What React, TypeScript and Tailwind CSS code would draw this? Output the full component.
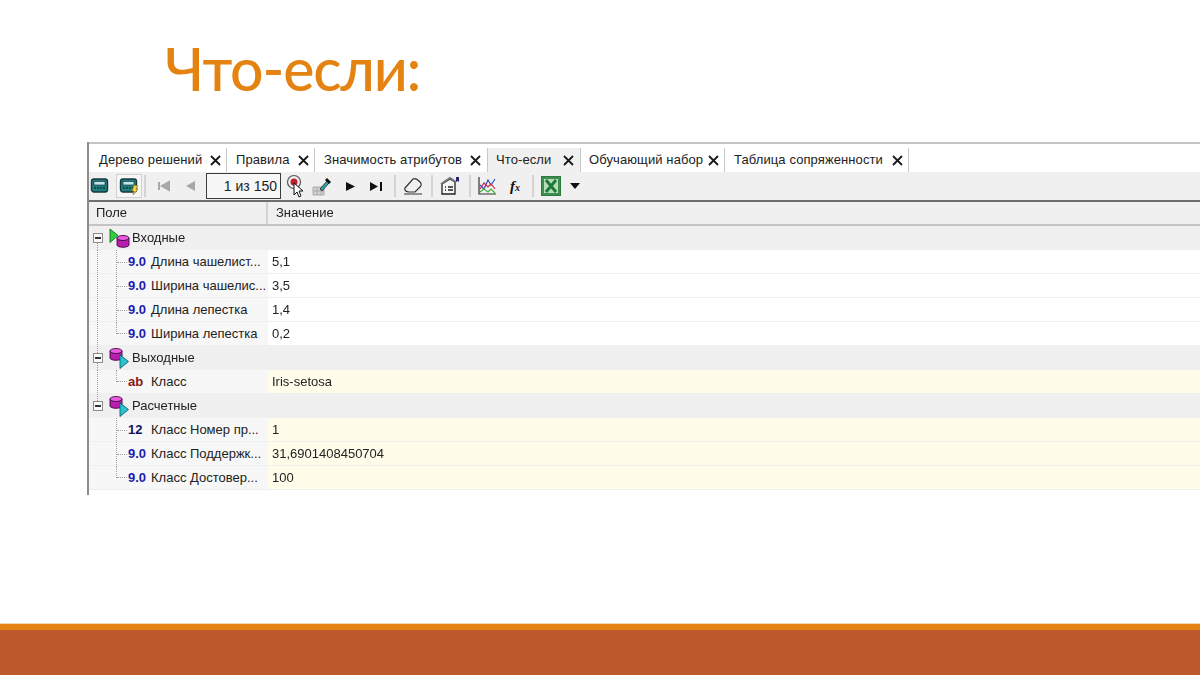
const tabs = [
  { name: 'Дерево решений', w: 'w-[138px]', pl: 'pl-[10px]', pr: 'pr-[5px]' },
  { name: 'Правила', w: 'w-[88px]', pl: 'pl-[9px]', pr: 'pr-[5px]' },
  { name: 'Значимость атрибутов', w: 'w-[173px]', pl: 'pl-[9px]', pr: 'pr-[6px]' },
  { name: 'Что-если', w: 'w-[93px]', pl: 'pl-[8px]', pr: 'pr-[6px]', active: true },
  { name: 'Обучающий набор', w: 'w-[144px]', pl: 'pl-[8px]', pr: 'pr-[5px]' },
  { name: 'Таблица сопряженности', w: 'w-[184px]', pl: 'pl-[9px]', pr: 'pr-[5px]' },
];

type Row =
  | { kind: 'group'; label: string; icon: 'in' | 'out'; up?: boolean; down?: boolean }
  | { kind: 'field'; tag: string; tagColor: string; label: string; value: string; cream?: boolean; last?: boolean; outer?: boolean };

const BLUE = 'text-[#1c1cb4]';
const NAVY = 'text-[#14145c]';
const RED = 'text-[#8a1414]';

const rows: Row[] = [
  { kind: 'group', label: 'Входные', icon: 'in', down: true },
  { kind: 'field', tag: '9.0', tagColor: BLUE, label: 'Длина чашелист...', value: '5,1', outer: true },
  { kind: 'field', tag: '9.0', tagColor: BLUE, label: 'Ширина чашелис...', value: '3,5', outer: true },
  { kind: 'field', tag: '9.0', tagColor: BLUE, label: 'Длина лепестка', value: '1,4', outer: true },
  { kind: 'field', tag: '9.0', tagColor: BLUE, label: 'Ширина лепестка', value: '0,2', last: true, outer: true },
  { kind: 'group', label: 'Выходные', icon: 'out', up: true, down: true },
  { kind: 'field', tag: 'ab', tagColor: RED, label: 'Класс', value: 'Iris-setosa', cream: true, last: true, outer: true },
  { kind: 'group', label: 'Расчетные', icon: 'out', up: true },
  { kind: 'field', tag: '12', tagColor: NAVY, label: 'Класс Номер пр...', value: '1', cream: true },
  { kind: 'field', tag: '9.0', tagColor: BLUE, label: 'Класс Поддержк...', value: '31,6901408450704', cream: true },
  { kind: 'field', tag: '9.0', tagColor: BLUE, label: 'Класс Достовер...', value: '100', cream: true, last: true },
];

function CloseX() {
  return (
    <svg width="11" height="11" viewBox="0 0 11 11" className="shrink-0">
      <path d="M1 1l9 9M10 1l-9 9" stroke="#1a1a1a" strokeWidth="1.8" />
    </svg>
  );
}

function Sep({ ml }: { ml: string }) {
  return <div className={`w-[2px] h-[22px] bg-[#d4d4d4] shrink-0 ${ml}`} />;
}

function Calc({ bolt }: { bolt?: boolean }) {
  return (
    <svg width="20" height="20" viewBox="0 0 20 20">
      <rect x="1.5" y="3" width="16" height="13" rx="2.5" fill="#1f7f7c" stroke="#17383c" strokeWidth="1.4" />
      <rect x="4" y="5.5" width="11" height="3.5" fill="#bfe7ea" stroke="#123" strokeWidth="0.6" />
      <path d="M4 12h11" stroke="#0d3d40" strokeWidth="1.6" strokeDasharray="2 1" />
      {bolt && <path d="M15 9l4 1-2 3 2 0-5 6 1-4-2 0z" fill="#f3d33c" stroke="#8a7a20" strokeWidth="0.6" />}
    </svg>
  );
}

function Toolbar() {
  return (
    <div className="h-[30px] shrink-0 flex items-center bg-[#f0f0f0] border-b-[2px] border-[#6e6e6e]">
      <div className="-ml-[1px] w-[24px] flex justify-center"><Calc /></div>
      <div className="ml-[4px] w-[26px] h-[24px] flex items-center justify-center border border-[#d0d0d0] bg-[#f7f7f7]"><Calc bolt /></div>
      <Sep ml="ml-[2px]" />
      <svg width="14" height="12" viewBox="0 0 14 12" className="ml-[11px]"><path d="M2 2v8M12 2v8L5 6z" stroke="#a8a8a8" strokeWidth="2" fill="#a8a8a8" /></svg>
      <svg width="12" height="12" viewBox="0 0 12 12" className="ml-[13px]"><path d="M11 1v10L2 6z" fill="#a8a8a8" /></svg>
      <div className="ml-[10px] w-[75px] h-[26px] border-[1.5px] border-[#3c3c3c] bg-[#f7f7f7] flex items-center justify-end pr-[3px] text-[14px] text-[#222]">1 из 150</div>
      {/* курсор */}
      <svg width="20" height="24" viewBox="0 0 20 24" className="ml-[5px]">
        <circle cx="8" cy="8" r="6.5" fill="#eee" stroke="#555" strokeWidth="1.2" />
        <circle cx="8" cy="8" r="3.5" fill="#c0202c" />
        <path d="M8 9l0 12 3-3 2 5 2-1-2-5 4 0z" fill="#fff" stroke="#111" strokeWidth="1" />
      </svg>
      {/* пипетка над таблицей */}
      <svg width="22" height="22" viewBox="0 0 22 22" className="ml-[6px]">
        <path d="M1 12h11v8H1z" fill="#d0d0d0" stroke="#aaa" />
        <path d="M1 16h11M5 12v8M9 12v8" stroke="#aaa" />
        <path d="M8 14l7-8 2 2-7 8z" fill="#2aa6a6" stroke="#222" strokeWidth="0.8" />
        <path d="M15 3l4 4-2 2-4-4z" fill="#111" />
      </svg>
      <svg width="11" height="11" viewBox="0 0 11 11" className="ml-[11px]"><path d="M1 1l9 4.500-9 4.500z" fill="#111" /></svg>
      <svg width="14" height="11" viewBox="0 0 14 11" className="ml-[13px]"><path d="M1 1l8 4.500-8 4.500z" fill="#111" /><path d="M11 1h2v9h-2z" fill="#111" /></svg>
      <Sep ml="ml-[11px]" />
      {/* ластик */}
      <svg width="20" height="20" viewBox="0 0 20 20" className="ml-[7px]">
        <path d="M2 12l8-9c2-1 5 1 7 3s1 4 0 5l-5 5H6c-3 0-5-2-4-4z" fill="none" stroke="#333" strokeWidth="1.2" />
        <path d="M1 18h18" stroke="#333" strokeWidth="1" />
      </svg>
      <Sep ml="ml-[8px]" />
      <svg width="20" height="20" viewBox="0 0 20 20" className="ml-[7px]">
        <path d="M2 8l8-5 5 3v12H2z" fill="#f4f4f4" stroke="#222" strokeWidth="1.3" />
        <path d="M1 8l9-6 6 4" fill="none" stroke="#777" strokeWidth="2" />
        <path d="M16 1h3v5l-1.500-1-1.500 1z" fill="#23236e" />
        <path d="M5 11h1M8 11h5M5 14h1M8 14h5" stroke="#222" strokeWidth="1.4" />
      </svg>
      <Sep ml="ml-[9px]" />
      {/* график */}
      <svg width="20" height="20" viewBox="0 0 20 20" className="ml-[6px]">
        <path d="M2 1v17h17" fill="none" stroke="#333" strokeWidth="1.2" />
        <path d="M3 9l4 4 4-9 3 5 4-6" fill="none" stroke="#2b4bc0" strokeWidth="1.200" />
        <path d="M3 13l4-6 4 4 3-3 4 5" fill="none" stroke="#d0283c" strokeWidth="1.200" />
        <path d="M3 16l4-3 4 3 3-3 4 4" fill="none" stroke="#40b040" strokeWidth="1.200" />
      </svg>
      <span className="ml-[8px] w-[20px] text-center text-[15px] leading-none font-bold italic text-[#111] [font-family:'Liberation_Serif',serif]">f<span className="text-[10px]">x</span></span>
      <Sep ml="ml-[7px]" />
      {/* Excel */}
      <svg width="20" height="20" viewBox="0 0 20 20" className="ml-[7px]">
        <rect x="0.500" y="0.500" width="19" height="19" fill="#3d8f4f" stroke="#2c7a40" />
        <rect x="3" y="3" width="14" height="14" fill="#b9dcb8" />
        <path d="M5 4l10 12M15 4L5 16" stroke="#1e7a3a" strokeWidth="3" />
      </svg>
      <svg width="10" height="6" viewBox="0 0 10 6" className="ml-[9px]"><path d="M0 0h10L5 6z" fill="#111" /></svg>
    </div>
  );
}

function GroupIcon({ kind }: { kind: 'in' | 'out' }) {
  const cyl = (x: number, y: number) => (
    <>
      <path d={`M${x} ${y + 3}v7c0 3 12 3 12 0v-7z`} fill="#b81cb0" stroke="#3c0a3c" strokeWidth="0.9" />
      <ellipse cx={x + 6} cy={y + 3} rx="6" ry="2.5" fill="#e85ade" stroke="#3c0a3c" strokeWidth="0.9" />
    </>
  );
  return (
    <svg width="21" height="22" viewBox="0 0 21 22" className="shrink-0">
      {kind === 'in' ? (
        <>
          <path d="M1 2l8 6.500-8 7z" fill="#2fd03c" stroke="#1c6a22" strokeWidth="0.9" />
          {cyl(8, 8)}
        </>
      ) : (
        <>
          {cyl(1, 1)}
          <path d="M11 8l8.500 6.500-8.500 7z" fill="#27c4d8" stroke="#14606c" strokeWidth="0.9" />
        </>
      )}
    </svg>
  );
}

function GroupRow({ label, icon, up, down }: { label: string; icon: 'in' | 'out'; up?: boolean; down?: boolean }) {
  return (
    <div className="relative h-[24px] flex items-center bg-[#f0f0f0]">
      {up && <div className="absolute left-[8px] top-0 h-[7px] border-l border-dotted border-[#a0a0a0]" />}
      {down && <div className="absolute left-[8px] bottom-0 h-[7px] border-l border-dotted border-[#a0a0a0]" />}
      <div className="ml-[4px] w-[10px] h-[10px] border border-[#8a8a8a] bg-[#fafafa] flex items-center justify-center shrink-0">
        <div className="w-[6px] h-[1.5px] bg-[#333]" />
      </div>
      <div className="ml-[6px]"><GroupIcon kind={icon} /></div>
      <span className="ml-[2px] text-[13px] text-[#222]">{label}</span>
    </div>
  );
}

function FieldRow({ row }: { row: Extract<Row, { kind: 'field' }> }) {
  return (
    <div className="h-[24px] flex border-b border-[#f0f0f0]">
      <div className="relative w-[179px] shrink-0 flex items-center bg-[#f7f7f7]">
        {row.outer && <div className="absolute left-[8px] top-0 bottom-0 border-l border-dotted border-[#a0a0a0]" />}
        <div className={`ml-[27px] w-[11px] shrink-0 border-l border-dotted border-[#a0a0a0] relative ${row.last ? 'h-[12px] self-start' : 'self-stretch'}`}>
          <div className={`absolute left-0 right-0 border-t border-dotted border-[#a0a0a0] ${row.last ? 'bottom-0' : 'top-[12px]'}`} />
        </div>
        <span className={`ml-[1px] w-[23px] shrink-0 pt-[1px] text-[13px] font-bold ${row.tagColor}`}>{row.tag}</span>
        <span className="pt-[1px] text-[13px] text-[#222] whitespace-nowrap">{row.label}</span>
      </div>
      <div className={`flex-1 flex items-center pl-[4px] pt-[1px] text-[13px] text-[#222] ${row.cream ? 'bg-[#fffdea]' : 'bg-white'}`}>{row.value}</div>
    </div>
  );
}

export default function App() {
  return (
    <div className="w-[1200px] h-[675px] overflow-hidden bg-white flex flex-col [font-family:'Liberation_Sans',sans-serif]">
      <h1 className="h-[142px] shrink-0 pl-[165px] pt-[26px] text-[59px] leading-[86px] font-medium tracking-[-1.2px] text-[#e48312] [font-family:'Lato',sans-serif]">Что-если:</h1>

      <div className="flex-1 ml-[87px] min-h-0">
        <div className="h-[353px] border-l-[2px] border-[#8c8c8c] flex flex-col blur-[0.3px]">
          <div className="h-[30px] shrink-0 flex items-end border-t-[2px] border-[#c4c4c4] bg-white">
            {tabs.map((t) => (
              <div key={t.name} className={`${t.w} h-[24px] shrink-0 flex items-center justify-between ${t.pr} ${t.pl} border-r-[1.5px] border-[#c8c8c8] text-[13px] tracking-[0.1px] text-[#222] whitespace-nowrap ${t.active ? 'bg-[#f0f0f0]' : ''}`}>
                <span>{t.name}</span>
                <CloseX />
              </div>
            ))}
          </div>
          <Toolbar />
          <div className="h-[24px] shrink-0 flex bg-[#f0f0f0] border-b-[2px] border-[#c4c4c4] text-[13px] text-[#222]">
            <div className="w-[179px] flex items-center pl-[7px] border-r-[2px] border-[#d4d4d4]">Поле</div>
            <div className="flex items-center pl-[8px]">Значение</div>
          </div>
          <div className="flex flex-col">
            {rows.map((r) =>
              r.kind === 'group' ? (
                <GroupRow key={r.label} label={r.label} icon={r.icon} up={r.up} down={r.down} />
              ) : (
                <FieldRow key={r.label} row={r} />
              ),
            )}
          </div>
        </div>
      </div>

      <div className="shrink-0 h-[7px] bg-[#e48312] border-t border-[#f0d9a8]" />
      <div className="shrink-0 h-[45px] bg-[#bd582c]" />
    </div>
  );
}
